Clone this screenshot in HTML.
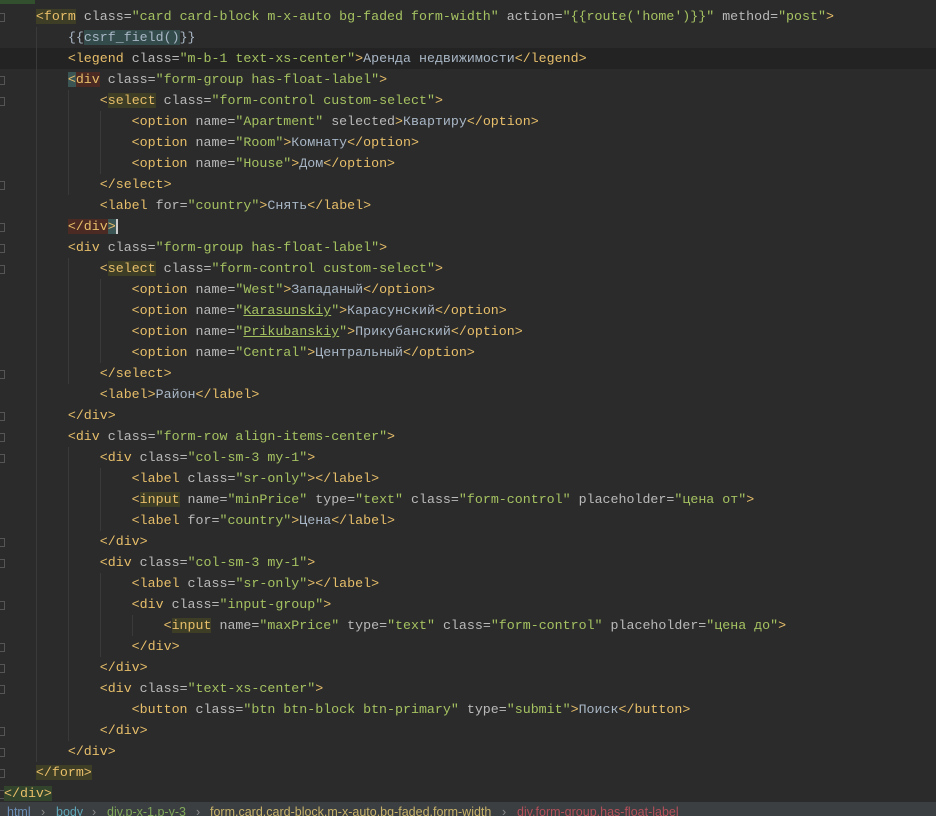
<!DOCTYPE html>
<html><head><meta charset="utf-8"><style>
html,body{margin:0;padding:0;width:936px;height:816px;overflow:hidden;background:#2b2b2b;}
#code{position:absolute;left:4px;top:6px;font-family:"Liberation Mono","DejaVu Sans Mono",monospace;font-size:13.3px;line-height:21px;color:#a9b7c6;}
.l{height:21px;position:relative;white-space:pre}
.t{color:#e8bf6a}.a{color:#bababa}.v{color:#a5c261}.x{color:#a9b7c6}
.hy{background:#3e3d25}.hg{background:#32442c}
.cur{position:absolute;left:-4px;width:940px;height:21px;background:#232323}
.g{position:absolute;width:1px;background:#3a3a3a}
.f{position:absolute;left:0;width:4px;height:7px;border:1px solid #555;border-left:none}
#bar{position:absolute;left:0;top:802px;width:936px;height:14px;background:#3c3f41;font-family:"Liberation Sans",sans-serif;font-size:12.5px;line-height:14px;white-space:pre;color:#888;overflow:hidden}
#bar span{position:absolute;top:3px}
</style></head><body>
<div style="position:absolute;left:0;top:0;width:35px;height:4px;background:#32502e"></div>
<div class="cur" style="top:48px;left:0"></div>
<div class="g" style="left:36px;top:27px;height:735px"></div>
<div class="g" style="left:68px;top:90px;height:105px"></div>
<div class="g" style="left:68px;top:258px;height:126px"></div>
<div class="g" style="left:68px;top:447px;height:294px"></div>
<div class="g" style="left:100px;top:111px;height:63px"></div>
<div class="g" style="left:100px;top:279px;height:84px"></div>
<div class="g" style="left:100px;top:468px;height:63px"></div>
<div class="g" style="left:100px;top:573px;height:84px"></div>
<div class="g" style="left:132px;top:615px;height:21px"></div>
<div class="f" style="top:13px"></div><div class="f" style="top:76px"></div><div class="f" style="top:97px"></div><div class="f" style="top:181px"></div><div class="f" style="top:223px"></div><div class="f" style="top:244px"></div><div class="f" style="top:265px"></div><div class="f" style="top:370px"></div><div class="f" style="top:412px"></div><div class="f" style="top:433px"></div><div class="f" style="top:454px"></div><div class="f" style="top:538px"></div><div class="f" style="top:559px"></div><div class="f" style="top:601px"></div><div class="f" style="top:643px"></div><div class="f" style="top:664px"></div><div class="f" style="top:685px"></div><div class="f" style="top:727px"></div><div class="f" style="top:748px"></div><div class="f" style="top:769px"></div><div class="f" style="top:790px"></div>
<div id="code">
<div class="l">    <span class="t hy">&lt;form</span> <span class="a">class=</span><span class="v">"card card-block m-x-auto bg-faded form-width"</span> <span class="a">action=</span><span class="v">"{{route('home')}}"</span> <span class="a">method=</span><span class="v">"post"</span><span class="t">&gt;</span></div>
<div class="l">        <span class="x">{{<span style="background:#344b4b">csrf_field()</span>}}</span></div>
<div class="l">        <span class="t">&lt;legend</span> <span class="a">class=</span><span class="v">"m-b-1 text-xs-center"</span><span class="t">&gt;</span>Аренда недвижимости<span class="t">&lt;/legend&gt;</span></div>
<div class="l">        <span class="t"><span style="background:#3b5454">&lt;</span><span style="background:#4a2a22">div</span></span> <span class="a">class=</span><span class="v">"form-group has-float-label"</span><span class="t">&gt;</span></div>
<div class="l">            <span class="t">&lt;<span class="hy">select</span></span> <span class="a">class=</span><span class="v">"form-control custom-select"</span><span class="t">&gt;</span></div>
<div class="l">                <span class="t">&lt;option</span> <span class="a">name=</span><span class="v">"Apartment"</span> <span class="a">selected</span><span class="t">&gt;</span>Квартиру<span class="t">&lt;/option&gt;</span></div>
<div class="l">                <span class="t">&lt;option</span> <span class="a">name=</span><span class="v">"Room"</span><span class="t">&gt;</span>Комнату<span class="t">&lt;/option&gt;</span></div>
<div class="l">                <span class="t">&lt;option</span> <span class="a">name=</span><span class="v">"House"</span><span class="t">&gt;</span>Дом<span class="t">&lt;/option&gt;</span></div>
<div class="l">            <span class="t">&lt;/select&gt;</span></div>
<div class="l">            <span class="t">&lt;label</span> <span class="a">for=</span><span class="v">"country"</span><span class="t">&gt;</span>Снять<span class="t">&lt;/label&gt;</span></div>
<div class="l">        <span class="t"><span style="background:#4a2a22">&lt;/div</span><span style="background:#3b5454">&gt;</span></span><span style="border-left:2px solid #ccc"></span></div>
<div class="l">        <span class="t">&lt;div</span> <span class="a">class=</span><span class="v">"form-group has-float-label"</span><span class="t">&gt;</span></div>
<div class="l">            <span class="t">&lt;<span class="hy">select</span></span> <span class="a">class=</span><span class="v">"form-control custom-select"</span><span class="t">&gt;</span></div>
<div class="l">                <span class="t">&lt;option</span> <span class="a">name=</span><span class="v">"West"</span><span class="t">&gt;</span>Западаный<span class="t">&lt;/option&gt;</span></div>
<div class="l">                <span class="t">&lt;option</span> <span class="a">name=</span><span class="v">"<u>Karasunskiy</u>"</span><span class="t">&gt;</span>Карасунский<span class="t">&lt;/option&gt;</span></div>
<div class="l">                <span class="t">&lt;option</span> <span class="a">name=</span><span class="v">"<u>Prikubanskiy</u>"</span><span class="t">&gt;</span>Прикубанский<span class="t">&lt;/option&gt;</span></div>
<div class="l">                <span class="t">&lt;option</span> <span class="a">name=</span><span class="v">"Central"</span><span class="t">&gt;</span>Центральный<span class="t">&lt;/option&gt;</span></div>
<div class="l">            <span class="t">&lt;/select&gt;</span></div>
<div class="l">            <span class="t">&lt;label&gt;</span>Район<span class="t">&lt;/label&gt;</span></div>
<div class="l">        <span class="t">&lt;/div&gt;</span></div>
<div class="l">        <span class="t">&lt;div</span> <span class="a">class=</span><span class="v">"form-row align-items-center"</span><span class="t">&gt;</span></div>
<div class="l">            <span class="t">&lt;div</span> <span class="a">class=</span><span class="v">"col-sm-3 my-1"</span><span class="t">&gt;</span></div>
<div class="l">                <span class="t">&lt;label</span> <span class="a">class=</span><span class="v">"sr-only"</span><span class="t">&gt;&lt;/label&gt;</span></div>
<div class="l">                <span class="t">&lt;<span class="hy">input</span></span> <span class="a">name=</span><span class="v">"minPrice"</span> <span class="a">type=</span><span class="v">"text"</span> <span class="a">class=</span><span class="v">"form-control"</span> <span class="a">placeholder=</span><span class="v">"цена от"</span><span class="t">&gt;</span></div>
<div class="l">                <span class="t">&lt;label</span> <span class="a">for=</span><span class="v">"country"</span><span class="t">&gt;</span>Цена<span class="t">&lt;/label&gt;</span></div>
<div class="l">            <span class="t">&lt;/div&gt;</span></div>
<div class="l">            <span class="t">&lt;div</span> <span class="a">class=</span><span class="v">"col-sm-3 my-1"</span><span class="t">&gt;</span></div>
<div class="l">                <span class="t">&lt;label</span> <span class="a">class=</span><span class="v">"sr-only"</span><span class="t">&gt;&lt;/label&gt;</span></div>
<div class="l">                <span class="t">&lt;div</span> <span class="a">class=</span><span class="v">"input-group"</span><span class="t">&gt;</span></div>
<div class="l">                    <span class="t">&lt;<span class="hy">input</span></span> <span class="a">name=</span><span class="v">"maxPrice"</span> <span class="a">type=</span><span class="v">"text"</span> <span class="a">class=</span><span class="v">"form-control"</span> <span class="a">placeholder=</span><span class="v">"цена до"</span><span class="t">&gt;</span></div>
<div class="l">                <span class="t">&lt;/div&gt;</span></div>
<div class="l">            <span class="t">&lt;/div&gt;</span></div>
<div class="l">            <span class="t">&lt;div</span> <span class="a">class=</span><span class="v">"text-xs-center"</span><span class="t">&gt;</span></div>
<div class="l">                <span class="t">&lt;button</span> <span class="a">class=</span><span class="v">"btn btn-block btn-primary"</span> <span class="a">type=</span><span class="v">"submit"</span><span class="t">&gt;</span>Поиск<span class="t">&lt;/button&gt;</span></div>
<div class="l">            <span class="t">&lt;/div&gt;</span></div>
<div class="l">        <span class="t">&lt;/div&gt;</span></div>
<div class="l">    <span class="t hy">&lt;/form&gt;</span></div>
<div class="l"><span class="t hg">&lt;/div&gt;</span></div>
</div>
<div id="bar"><span style="left:7px;color:#6c8fb8">html</span><span style="left:41px">›</span><span style="left:56px;color:#5ea6b8">body</span><span style="left:92px">›</span><span style="left:107px;color:#7fa85a">div.p-x-1.p-y-3</span><span style="left:196px">›</span><span style="left:210px;color:#c9b36a">form.card.card-block.m-x-auto.bg-faded.form-width</span><span style="left:502px">›</span><span style="left:517px;color:#b4505a">div.form-group.has-float-label</span></div>
</body></html>
